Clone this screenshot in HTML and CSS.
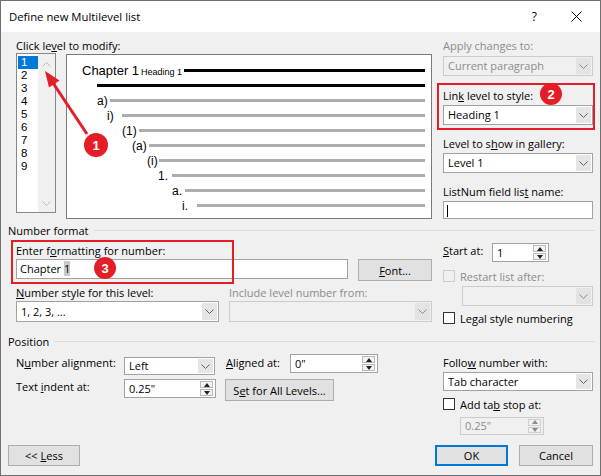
FILE: index.html
```html
<!DOCTYPE html>
<html>
<head>
<meta charset="utf-8">
<title>Define new Multilevel list</title>
<link rel="stylesheet" href="styles.css">
</head>
<body>
<div class="window">
  <div class="titlebar">
    <span class="title">Define new Multilevel list</span>
    <span class="help">?</span>
    <svg class="close" width="11" height="11" viewBox="0 0 11 11"><path d="M0.5 0.5 L10.5 10.5 M10.5 0.5 L0.5 10.5" stroke="#000" stroke-width="1" fill="none"/></svg>
  </div>

  <div class="row top">
    <div class="left">
      <div class="lbl">Click le<u>v</u>el to modify:</div>
      <div class="levels-row">
        <div class="levels">
          <div class="items">
            <div class="item sel">1</div>
            <div class="item">2</div>
            <div class="item">3</div>
            <div class="item">4</div>
            <div class="item">5</div>
            <div class="item">6</div>
            <div class="item">7</div>
            <div class="item">8</div>
            <div class="item">9</div>
          </div>
          <div class="vscroll">
            <svg width="9" height="5" viewBox="0 0 9 5"><polyline points="0.5,4.5 4.5,0.5 8.5,4.5" fill="none" stroke="#bcbcbc" stroke-width="1"/></svg>
            <svg width="9" height="5" viewBox="0 0 9 5"><polyline points="0.5,0.5 4.5,4.5 8.5,0.5" fill="none" stroke="#bcbcbc" stroke-width="1"/></svg>
          </div>
        </div>
        <div class="preview">
          <div class="prow p0"><span class="chap">Chapter 1</span><span class="hd">Heading 1</span><span class="bar black"></span></div>
          <div class="prow p1"><span class="bar black"></span></div>
          <div class="prow lv1"><span class="num">a)</span><span class="bar"></span></div>
          <div class="prow lv2"><span class="num">i)</span><span class="bar"></span></div>
          <div class="prow lv3"><span class="num">(1)</span><span class="bar"></span></div>
          <div class="prow lv4"><span class="num">(a)</span><span class="bar"></span></div>
          <div class="prow lv5"><span class="num">(i)</span><span class="bar"></span></div>
          <div class="prow lv6"><span class="num">1.</span><span class="bar"></span></div>
          <div class="prow lv7"><span class="num">a.</span><span class="bar"></span></div>
          <div class="prow lv8"><span class="num">i.</span><span class="bar"></span></div>
        </div>
      </div>
    </div>
    <div class="right">
      <div class="lbl dis">Apply changes to:</div>
      <div class="combo dis c-apply"><span class="val">Current paragraph</span><span class="arrow"><svg width="9" height="5" viewBox="0 0 9 5"><polyline points="0.5,0.5 4.5,4.5 8.5,0.5" fill="none" stroke="#8a8a8a" stroke-width="1"/></svg></span></div>
      <div class="lbl g2">Lin<u>k</u> level to style:</div>
      <div class="combo c2"><span class="val">Heading 1</span><span class="arrow"><svg width="9" height="5" viewBox="0 0 9 5"><polyline points="0.5,0.5 4.5,4.5 8.5,0.5" fill="none" stroke="#606060" stroke-width="1"/></svg></span></div>
      <div class="lbl g3">Level to s<u>h</u>ow in gallery:</div>
      <div class="combo c2"><span class="val">Level 1</span><span class="arrow"><svg width="9" height="5" viewBox="0 0 9 5"><polyline points="0.5,0.5 4.5,4.5 8.5,0.5" fill="none" stroke="#606060" stroke-width="1"/></svg></span></div>
      <div class="lbl g3">ListNum field lis<u>t</u> name:</div>
      <div class="textbox tb-list"><span class="caret"></span></div>
    </div>
  </div>

  <div class="ghead">Number format</div>

  <div class="row mid">
    <div class="left">
      <div class="lbl m1">Enter f<u>o</u>rmatting for number:</div>
      <div class="fmt-row">
        <div class="textbox tb-fmt">Chapter <span class="hl">1</span></div>
        <div class="btn b-font"><span><u>F</u>ont...</span></div>
      </div>
      <div class="cols">
        <div class="col">
          <div class="lbl"><u>N</u>umber style for this level:</div>
          <div class="combo c-style"><span class="val">1, 2, 3, ...</span><span class="arrow"><svg width="9" height="5" viewBox="0 0 9 5"><polyline points="0.5,0.5 4.5,4.5 8.5,0.5" fill="none" stroke="#606060" stroke-width="1"/></svg></span></div>
        </div>
        <div class="col">
          <div class="lbl dis">Include level number from:</div>
          <div class="combo dis c-style"><span class="val"></span><span class="arrow"><svg width="9" height="5" viewBox="0 0 9 5"><polyline points="0.5,0.5 4.5,4.5 8.5,0.5" fill="none" stroke="#8a8a8a" stroke-width="1"/></svg></span></div>
        </div>
      </div>
    </div>
    <div class="right">
      <div class="start-row">
        <div class="lbl start-lbl"><u>S</u>tart at:</div>
        <div class="spin s-start"><span class="val">1</span><span class="sbtns"><span class="sb"><i class="up"></i></span><span class="sb"><i class="down"></i></span></span></div>
      </div>
      <div class="chk-row r-restart"><span class="chk dis"></span><span class="dis">Restart list after:</span></div>
      <div class="combo dis c-restart"><span class="val"></span><span class="arrow"><svg width="9" height="5" viewBox="0 0 9 5"><polyline points="0.5,0.5 4.5,4.5 8.5,0.5" fill="none" stroke="#8a8a8a" stroke-width="1"/></svg></span></div>
      <div class="chk-row r-legal"><span class="chk"></span><span>Le<u>g</u>al style numbering</span></div>
    </div>
  </div>

  <div class="ghead g-pos">Position</div>

  <div class="row bot">
    <div class="left">
      <div class="brow1">
        <div class="lbl w108 mt6">N<u>u</u>mber alignment:</div>
        <div class="combo c-align"><span class="val">Left</span><span class="arrow"><svg width="9" height="5" viewBox="0 0 9 5"><polyline points="0.5,0.5 4.5,4.5 8.5,0.5" fill="none" stroke="#606060" stroke-width="1"/></svg></span></div>
        <div class="lbl l-aligned mt6"><u>A</u>ligned at:</div>
        <div class="spin s-aligned"><span class="val">0"</span><span class="sbtns"><span class="sb"><i class="up"></i></span><span class="sb"><i class="down"></i></span></span></div>
      </div>
      <div class="brow2">
        <div class="lbl w108">Text <u>i</u>ndent at:</div>
        <div class="spin s-indent"><span class="val">0.25"</span><span class="sbtns"><span class="sb"><i class="up"></i></span><span class="sb"><i class="down"></i></span></span></div>
        <div class="btn b-setall"><span>S<u>e</u>t for All Levels...</span></div>
      </div>
    </div>
    <div class="right">
      <div class="lbl mt6">Follo<u>w</u> number with:</div>
      <div class="combo c-follow"><span class="val">Tab character</span><span class="arrow"><svg width="9" height="5" viewBox="0 0 9 5"><polyline points="0.5,0.5 4.5,4.5 8.5,0.5" fill="none" stroke="#606060" stroke-width="1"/></svg></span></div>
      <div class="chk-row r-tab"><span class="chk"></span><span>Add ta<u>b</u> stop at:</span></div>
      <div class="spin dis s-tab"><span class="val">0.25"</span><span class="sbtns"><span class="sb"><i class="up"></i></span><span class="sb"><i class="down"></i></span></span></div>
    </div>
  </div>

  <div class="buttons">
    <div class="btn b-less"><span>&lt;&lt; <u>L</u>ess</span></div>
    <div class="spacer"></div>
    <div class="btn b-ok"><span>OK</span></div>
    <div class="btn b-cancel"><span>Cancel</span></div>
  </div>

  <svg class="arrow-anno" width="601" height="476" viewBox="0 0 601 476">
    <line x1="87" y1="134" x2="53" y2="83" stroke="#e41e26" stroke-width="3"/>
    <polygon points="45,71 59.5,80.5 49,87.5" fill="#e41e26"/>
  </svg>
  <div class="rbox box2"></div>
  <div class="rbox box3"></div>
  <div class="badge c1">1</div>
  <div class="badge c2b">2</div>
  <div class="badge c3">3</div>
</div>
</body>
</html>
```

FILE: styles.css
```css
* { box-sizing: border-box; }
html, body { margin: 0; padding: 0; }
body {
  width: 601px;
  height: 476px;
  overflow: hidden;
  background: #f0f0f0;
  font-family: "Open Sans", "Noto Sans", sans-serif;
  font-size: 11px;
  color: #000;
}
u { text-decoration: underline; text-underline-offset: 1px; }

.window {
  position: relative;
  width: 601px;
  height: 476px;
  border: 1px solid #707070;
  background: #f0f0f0;
}

.titlebar {
  height: 31px;
  background: #fff;
  display: flex;
  align-items: center;
  padding-left: 8px;
}
.title { flex: 1; font-size: 11.3px; }
.help { font-size: 12px; margin-right: 34px; }
.close { margin-right: 18px; }

.row { display: flex; padding-left: 15px; }
.left { width: 416px; }
.right { width: 150px; margin-left: 11px; }

.lbl { line-height: 15px; height: 15px; white-space: nowrap; }
.dis { color: #8b8b8b; }

/* top */
.top { margin-top: 6px; }
.levels-row { display: flex; }
.levels {
  width: 40px;
  height: 160px;
  border: 1px solid #828790;
  background: #fff;
  display: flex;
}
.items { width: 21px; padding: 2px 0 0 1px; }
.item {
  width: 20px;
  height: 13px;
  line-height: 13px;
  padding-left: 3px;
  font-family: "Liberation Sans", Arial, sans-serif;
  font-size: 11.5px;
}
.item.sel { background: #0078d7; color: #fff; }
.vscroll {
  width: 17px;
  background: #f0f0f0;
  display: flex;
  flex-direction: column;
  justify-content: space-between;
  align-items: center;
  padding: 8px 0 6px;
}
.preview {
  width: 366px;
  height: 165px;
  margin-left: 10px;
  margin-top: 1px;
  border: 1px solid #7a7a7a;
  background: #fff;
  padding: 8px 6px 0 0;
  font-family: "Liberation Sans", Arial, sans-serif;
}
.prow { display: flex; align-items: center; height: 15px; }
.bar { flex: 1; height: 3px; background: #adadad; }
.bar.black { background: #000; }
.p0 { padding-left: 15px; }
.chap { font-size: 13px; margin-right: 2px; }
.hd { font-size: 9px; padding-top: 3px; margin-right: 2px; }
.p1 { padding-left: 30px; }
.num { font-size: 12px; flex: none; }
.lv1 { padding-left: 30px; } .lv1 .num { width: 13px; }
.lv2 { padding-left: 40px; } .lv2 .num { width: 15px; }
.lv3 { padding-left: 55px; } .lv3 .num { width: 17px; }
.lv4 { padding-left: 65px; } .lv4 .num { width: 17px; }
.lv5 { padding-left: 80px; } .lv5 .num { width: 12px; }
.lv6 { padding-left: 91px; } .lv6 .num { width: 14px; }
.lv7 { padding-left: 105px; } .lv7 .num { width: 13px; }
.lv8 { padding-left: 115px; } .lv8 .num { width: 15px; }

/* controls */
.combo {
  display: flex;
  height: 20px;
  border: 1px solid #a2a2a2;
  background: #fff;
}
.combo .val { flex: 1; padding-left: 4px; line-height: 18px; white-space: nowrap; overflow: hidden; }
.combo .arrow {
  width: 15px;
  margin: 1px;
  background: #e5e5e5;
  display: flex;
  align-items: center;
  justify-content: center;
}
.combo.dis { background: #f0f0f0; border-color: #cccccc; }
.combo.dis .arrow { background: #e3e3e3; }

.textbox {
  height: 20px;
  border: 1px solid #a2a2a2;
  background: #fff;
  padding-left: 3px;
  line-height: 18px;
  white-space: pre;
}
.caret { display: inline-block; width: 1px; height: 12px; background: #000; vertical-align: middle; }
.hl { background: #c8c8c8; }

.btn {
  height: 21px;
  border: 1px solid #adadad;
  background: #e1e1e1;
  display: flex;
  align-items: center;
  justify-content: center;
  white-space: pre;
}

.spin {
  display: flex;
  height: 19px;
  border: 1px solid #a2a2a2;
  background: #fff;
}
.spin .val { flex: 1; padding-left: 4px; line-height: 17px; }
.sbtns { width: 13px; margin: 1px 2px 1px 0; display: flex; flex-direction: column; gap: 1px; }
.sb {
  flex: 1;
  border: 1px solid #b8b8b8;
  background: #f4f4f4;
  display: flex;
  align-items: center;
  justify-content: center;
}
.sb i { display: block; width: 0; height: 0; border-left: 3.5px solid transparent; border-right: 3.5px solid transparent; }
.sb i.up { border-bottom: 4px solid #222; }
.sb i.down { border-top: 4px solid #222; }
.spin.dis { background: #f0f0f0; border-color: #cccccc; }
.spin.dis .val { color: #8b8b8b; }
.spin.dis .sb { border-color: #d0d0d0; background: #f0f0f0; }
.spin.dis .sb i.up { border-bottom-color: #8b8b8b; }
.spin.dis .sb i.down { border-top-color: #8b8b8b; }

.chk-row { display: flex; align-items: center; height: 12px; white-space: nowrap; }
.chk {
  width: 12px;
  height: 12px;
  border: 1px solid #333;
  background: #fff;
  margin-right: 5px;
  flex: none;
}
.chk.dis { border-color: #cccccc; background: #f0f0f0; }

/* right top spacing */
.c-apply { margin-top: 3px; }
.g2 { margin-top: 12px; }
.c2 { margin-top: 2px; }
.g3 { margin-top: 11px; }
.tb-list { margin-top: 2px; height: 18px; line-height: 16px; }

/* group headers */
.ghead {
  display: flex;
  align-items: center;
  line-height: 15px;
  height: 15px;
  padding-left: 7px;
  padding-right: 5px;
  margin-top: 4px;
  white-space: nowrap;
}
.ghead::after {
  content: "";
  flex: 1;
  height: 1px;
  background: #dcdcdc;
  margin-left: 5px;
}
.g-pos { margin-top: 10px; }

/* mid */
.m1 { margin-top: 5px; }
.fmt-row { display: flex; margin-top: 1px; }
.tb-fmt { width: 332px; }
.b-font { width: 74px; height: 22px; margin-left: 10px; }
.cols { display: flex; gap: 10px; margin-top: 4px; }
.col { width: 203px; }
.c-style { height: 21px; margin-top: 1px; }
.c-style .val { line-height: 19px; }

.start-row { display: flex; margin-top: 5px; }
.start-lbl { width: 49px; }
.s-start { width: 57px; }
.r-restart { margin-top: 8px; }
.c-restart { width: 131px; margin: 4px 0 0 19px; }
.r-legal { margin-top: 6px; }

/* bottom */
.brow1 { display: flex; align-items: flex-start; }
.w108 { width: 108px; }
.mt6 { margin-top: 6px; }
.c-align { width: 91px; height: 18px; margin-top: 8px; }
.c-align .val { line-height: 16px; }
.l-aligned { width: 64px; margin-left: 11px; }
.s-aligned { width: 88px; margin-top: 5px; }
.brow2 { display: flex; margin-top: 4px; }
.s-indent { width: 92px; }
.b-setall { width: 109px; height: 22px; margin-left: 9px; }

.c-follow { margin-top: 2px; height: 19px; }
.c-follow .val { line-height: 17px; }
.r-tab { margin-top: 7px; }
.s-tab { width: 84px; height: 18px; margin: 7px 0 0 17px; }
.s-tab .val { line-height: 16px; }

/* buttons */
.buttons { display: flex; padding: 0 7px; margin-top: 10px; }
.spacer { flex: 1; }
.b-less { width: 72px; }
.b-ok { width: 73px; border: 2px solid #0078d7; }
.b-cancel { width: 74px; margin-left: 11px; }

/* annotations */
.arrow-anno { position: absolute; left: -1px; top: -1px; pointer-events: none; }
.rbox { position: absolute; border: 2px solid #e41e26; }
.box2 { left: 436px; top: 82px; width: 158px; height: 47px; }
.box3 { left: 10px; top: 239px; width: 223px; height: 44px; }
.badge {
  position: absolute;
  border-radius: 50%;
  background: #e41e26;
  color: #fff;
  font-family: "Liberation Sans", Arial, sans-serif;
  font-weight: bold;
  font-size: 13px;
  display: flex;
  align-items: center;
  justify-content: center;
}
.c1 { left: 83px; top: 132px; width: 24px; height: 24px; }
.c2b { left: 539px; top: 82px; width: 22px; height: 22px; }
.c3 { left: 93px; top: 256px; width: 22px; height: 22px; }
```
